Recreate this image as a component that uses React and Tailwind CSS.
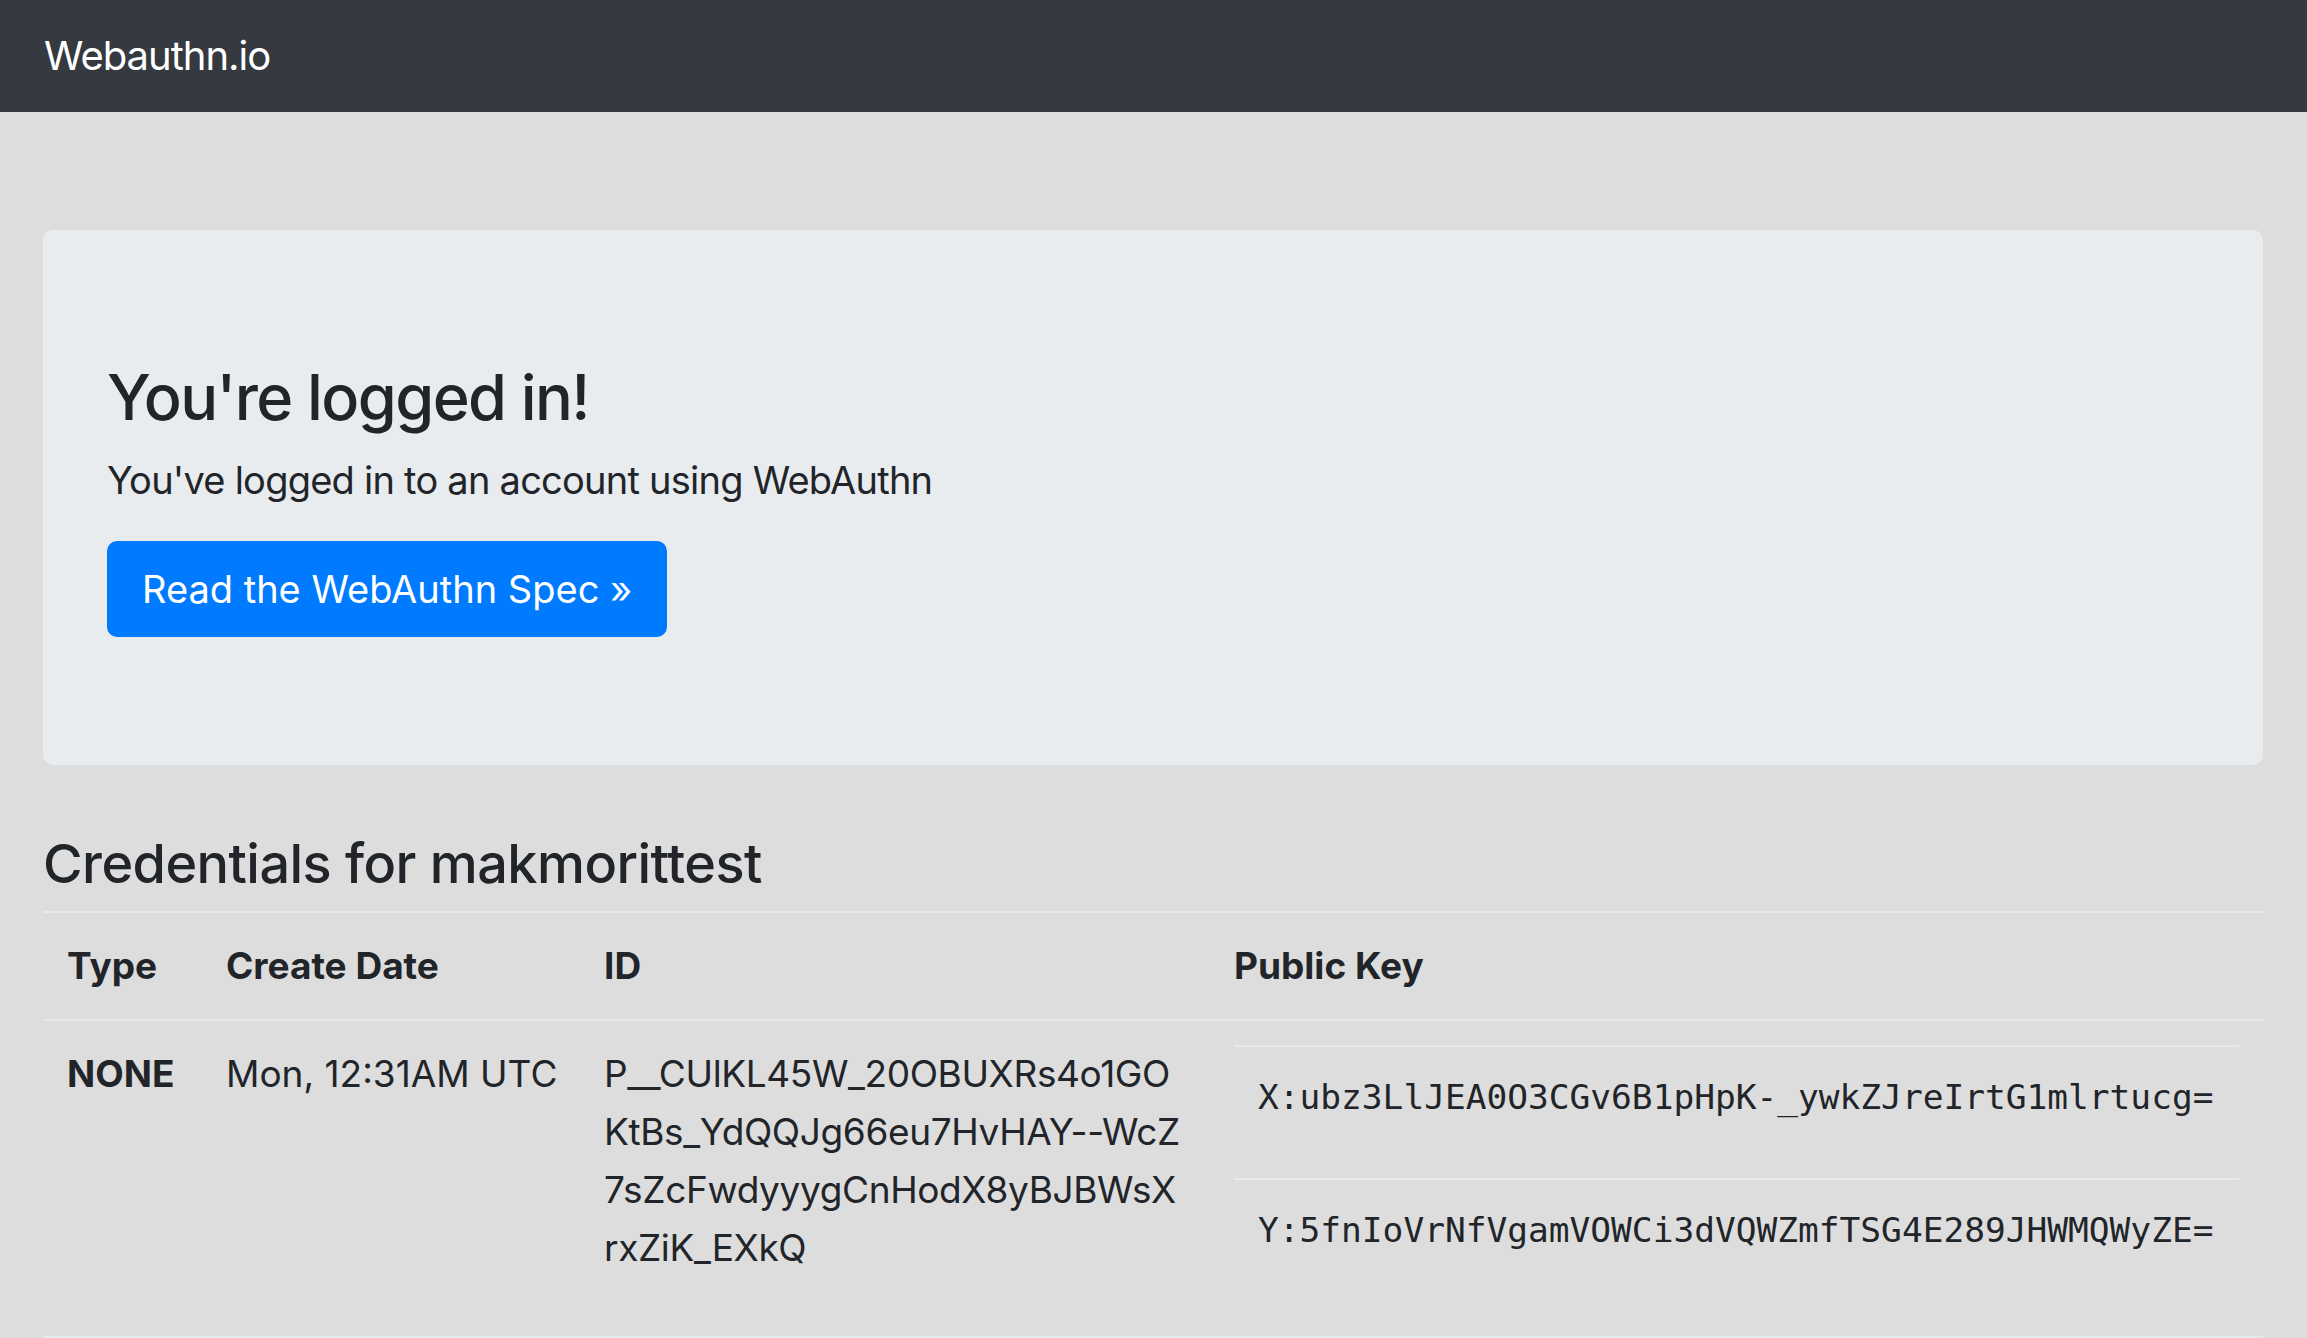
import React from 'react';

// Credential row data, shown as it appears on the page
const CREDENTIAL = {
  type: 'NONE',
  created: 'Mon, 12:31AM UTC',
  idLines: [
    'P__CUlKL45W_20OBUXRs4o1GO',
    'KtBs_YdQQJg66eu7HvHAY--WcZ',
    '7sZcFwdyyygCnHodX8yBJBWsX',
    'rxZiK_EXkQ',
  ],
  publicKey: [
    'X:ubz3LlJEA0O3CGv6B1pHpK-_ywkZJreIrtG1mlrtucg=',
    'Y:5fnIoVrNfVgamVOWCi3dVQWZmfTSG4E289JHWMQWyZE=',
  ],
};

const Navbar = () => (
  <nav className="h-[112px] bg-[#343a40] flex items-center pl-[44px]">
    <a href="#" className="text-white text-[40px] leading-[60px] tracking-[-0.025em]">
      Webauthn.io
    </a>
  </nav>
);

const Jumbotron = () => (
  <div className="bg-[#e9ecef] rounded-[10px] pt-[129px] pb-[128px] px-[64px]">
    <h1 className="text-[63px] leading-[76px] font-medium tracking-[-0.025em] mb-[15px]">
      You're logged in!
    </h1>
    <p className="text-[38px] leading-[60px] tracking-[-0.02em] mb-[31px]">
      You've logged in to an account using WebAuthn
    </p>
    <a
      href="#"
      className="inline-flex items-center h-[96px] px-[35px] rounded-[10px] bg-[#007bff] text-white text-[38px]"
    >
      Read the WebAuthn Spec »
    </a>
  </div>
);

const CredentialsTable = () => (
  <table className="w-full table-fixed border-collapse text-[37px] leading-[58px]">
    <thead>
      <tr>
        <th className="w-[159px] p-[24px] text-left align-bottom font-bold border-t-2 border-b-2 border-[#e7eaed]">Type</th>
        <th className="w-[378px] p-[24px] text-left align-bottom font-bold border-t-2 border-b-2 border-[#e7eaed]">Create Date</th>
        <th className="w-[630px] p-[24px] text-left align-bottom font-bold border-t-2 border-b-2 border-[#e7eaed]">ID</th>
        <th className="p-[24px] text-left align-bottom font-bold border-t-2 border-b-2 border-[#e7eaed]">Public Key</th>
      </tr>
    </thead>
    <tbody>
      <tr>
        <td className="p-[24px] align-top font-bold border-b-2 border-[#e7eaed]">{CREDENTIAL.type}</td>
        <td className="p-[24px] align-top whitespace-nowrap border-b-2 border-[#e7eaed]">{CREDENTIAL.created}</td>
        <td className="p-[24px] align-top whitespace-nowrap tracking-[-0.01em] border-b-2 border-[#e7eaed]">
          {CREDENTIAL.idLines.map((line) => (
            <div key={line}>{line}</div>
          ))}
        </td>
        <td className="p-[24px] align-top border-b-2 border-[#e7eaed]">
          <table className="w-full border-collapse">
            <tbody>
              {CREDENTIAL.publicKey.map((part) => (
                <tr key={part}>
                  <td className="h-[133px] align-top pt-[20px] px-[24px] border-t-2 border-[#e7eaed]">
                    <code className="font-['DejaVu_Sans_Mono','Liberation_Mono',monospace] text-[34.5px] leading-[58px] whitespace-nowrap">
                      {part}
                    </code>
                  </td>
                </tr>
              ))}
            </tbody>
          </table>
        </td>
      </tr>
    </tbody>
  </table>
);

export default function App() {
  return (
    <div className="min-h-screen bg-[#dddddd] text-[#212529] font-['Inter','Noto_Sans',sans-serif]">
      <Navbar />
      <main className="pl-[43px] pr-[44px] pt-[118px]">
        <Jumbotron />
        <h3 className="mt-[66px] mb-[15px] text-[54px] leading-[65px] font-medium tracking-[-0.01em]">
          Credentials for makmorittest
        </h3>
        <CredentialsTable />
      </main>
    </div>
  );
}
